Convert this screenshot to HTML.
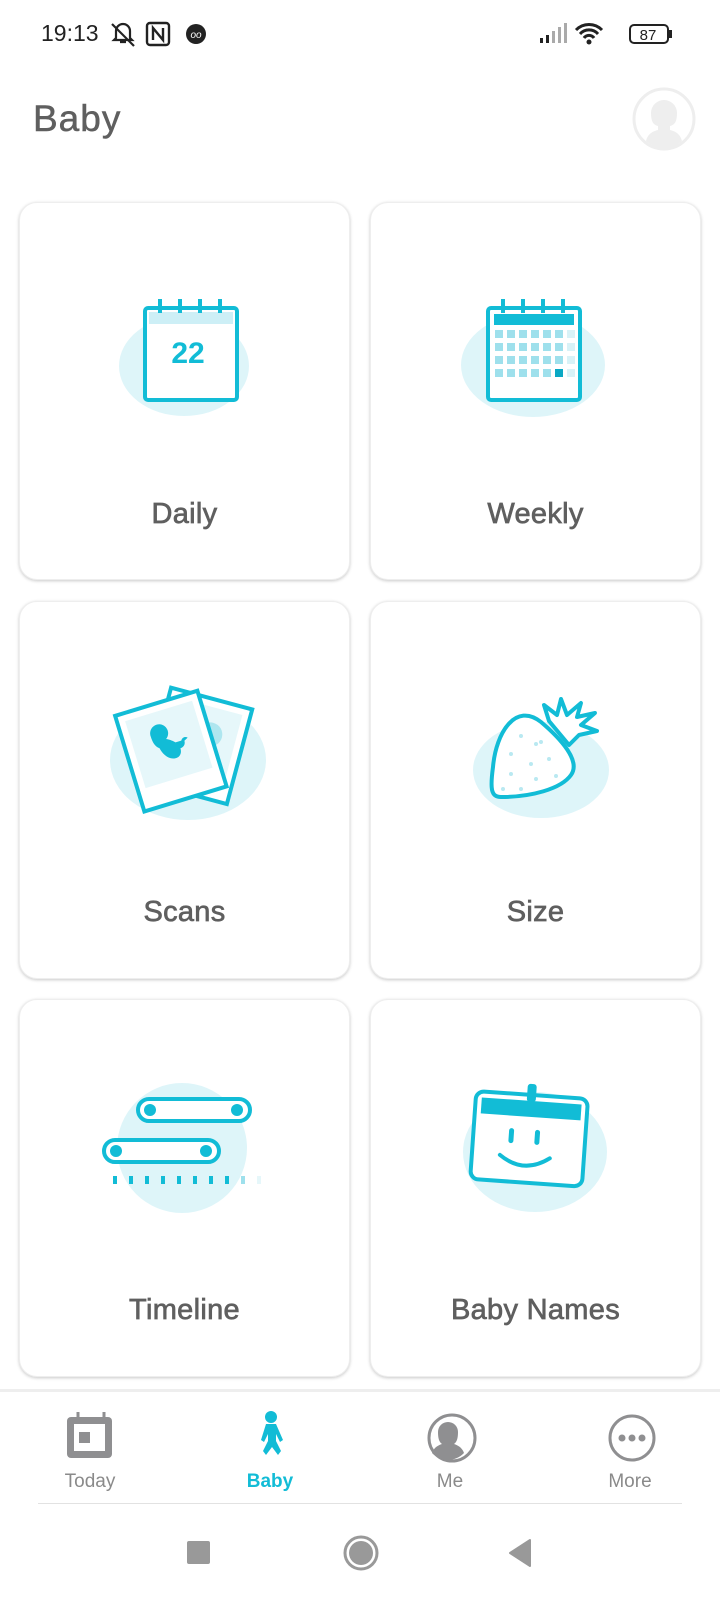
<!DOCTYPE html>
<html><head><meta charset="utf-8"><style>
*{margin:0;padding:0;box-sizing:border-box}
body{width:720px;height:1600px;background:#fff;font-family:"Liberation Sans",sans-serif;position:relative;overflow:hidden;color:#666}
.abs{position:absolute}
.card{position:absolute;width:331px;height:378px;border-radius:18px;background:#fff;box-shadow:0 1px 3px rgba(0,0,0,.22);border:1px solid #eee}
.lbl{position:absolute;left:0;right:0;text-align:center;font-size:29px;color:#5f5f5f;font-weight:normal;-webkit-text-stroke:0.7px #5f5f5f;letter-spacing:.3px}
.nav{position:absolute;top:1471px;font-size:19px;color:#8a8a8a;text-align:center;width:120px}
</style></head><body>
<div class="abs" style="left:41px;top:20px;font-size:23px;color:#222">19:13</div>
<svg class="abs" style="left:110px;top:20px" width="110" height="30">
<path d="M4 20 L6 18 V11 a7 7 0 0 1 14 0 V18 L22 20 Z M10 22 h6" fill="none" stroke="#222" stroke-width="2.2"/><path d="M2 4 L24 26" stroke="#222" stroke-width="2.2"/>
<rect x="37" y="3" width="22" height="22" rx="3" fill="none" stroke="#222" stroke-width="2.4"/><path d="M43 20 V8 L53 20 V8" fill="none" stroke="#222" stroke-width="2.4"/>
<circle cx="86" cy="14" r="10" fill="#222"/><text x="86" y="18" font-size="10" fill="#fff" text-anchor="middle" font-style="italic">oo</text>
</svg>
<svg class="abs" style="left:538px;top:20px" width="140" height="30">
<rect x="2" y="18" width="3" height="5" fill="#222"/><rect x="8" y="15" width="3" height="8" fill="#222"/><rect x="14" y="11" width="3" height="12" fill="#aaa"/><rect x="20" y="7" width="3" height="16" fill="#aaa"/><rect x="26" y="3" width="3" height="20" fill="#aaa"/>
<path d="M38 10 a18 18 0 0 1 26 0 M42 14 a12 12 0 0 1 18 0 M46 18 a6 6 0 0 1 10 0" fill="none" stroke="#222" stroke-width="3"/><circle cx="51" cy="22" r="2.5" fill="#222"/>
<rect x="92" y="5" width="38" height="18" rx="4" fill="none" stroke="#222" stroke-width="2"/><rect x="131" y="10" width="3" height="8" fill="#222"/><text x="110" y="20" font-size="15" fill="#222" text-anchor="middle">87</text>
</svg>
<div class="abs" style="left:33px;top:98px;font-size:37px;color:#5f5f5f;letter-spacing:1px;-webkit-text-stroke:0.5px #5f5f5f">Baby</div>
<svg class="abs" style="left:632px;top:87px" width="64" height="64"><circle cx="32" cy="32" r="30" fill="#fff" stroke="#eee" stroke-width="3"/><path d="M14 54 c2-8 8-10 12-11 v-4 c-5-1-7-5-7-13 a13 13 0 0 1 26 0 c0 8-2 12-7 13 v4 c4 1 10 3 12 11 a27 27 0 0 1-36 0Z" fill="#eee"/></svg>

<div class="card" style="left:19px;top:202px">
<svg class="abs" style="left:0;top:0" width="331" height="300">
<ellipse cx="164" cy="163" rx="65" ry="50" fill="#def5f9"/>
<rect x="125" y="105" width="92" height="92" rx="3" fill="#fff" stroke="#12bcd6" stroke-width="4"/>
<rect x="129" y="109" width="84" height="12" fill="#cdeff6"/>
<g stroke="#12bcd6" stroke-width="4"><path d="M140 96v14M160 96v14M180 96v14M200 96v14"/></g>
<text x="168" y="160" font-size="30" font-weight="bold" fill="#12bcd6" text-anchor="middle">22</text>
</svg><div class="lbl" style="top:295px">Daily</div></div>

<div class="card" style="left:370px;top:202px">
<svg class="abs" style="left:0;top:0" width="331" height="300">
<ellipse cx="162" cy="162" rx="72" ry="52" fill="#def5f9"/>
<rect x="117" y="105" width="92" height="92" rx="3" fill="#fff" stroke="#12bcd6" stroke-width="4"/>
<rect x="123" y="111" width="80" height="11" fill="#12bcd6"/>
<g stroke="#12bcd6" stroke-width="4"><path d="M132 96v14M152 96v14M172 96v14M192 96v14"/></g>
<g fill="#9ee0ec">
<rect x="124" y="127" width="8" height="8"/><rect x="136" y="127" width="8" height="8"/><rect x="148" y="127" width="8" height="8"/><rect x="160" y="127" width="8" height="8"/><rect x="172" y="127" width="8" height="8"/><rect x="184" y="127" width="8" height="8"/>
<rect x="124" y="140" width="8" height="8"/><rect x="136" y="140" width="8" height="8"/><rect x="148" y="140" width="8" height="8"/><rect x="160" y="140" width="8" height="8"/><rect x="172" y="140" width="8" height="8"/><rect x="184" y="140" width="8" height="8"/>
<rect x="124" y="153" width="8" height="8"/><rect x="136" y="153" width="8" height="8"/><rect x="148" y="153" width="8" height="8"/><rect x="160" y="153" width="8" height="8"/><rect x="172" y="153" width="8" height="8"/><rect x="184" y="153" width="8" height="8"/>
<rect x="124" y="166" width="8" height="8"/><rect x="136" y="166" width="8" height="8"/><rect x="148" y="166" width="8" height="8"/><rect x="160" y="166" width="8" height="8"/><rect x="172" y="166" width="8" height="8"/></g>
<g fill="#d8f2f7"><rect x="196" y="127" width="8" height="8"/><rect x="196" y="140" width="8" height="8"/><rect x="196" y="153" width="8" height="8"/><rect x="196" y="166" width="8" height="8"/></g>
<rect x="184" y="166" width="8" height="8" fill="#0aa8c4"/>
</svg><div class="lbl" style="top:295px">Weekly</div></div>

<div class="card" style="left:19px;top:601px">
<svg class="abs" style="left:0;top:0" width="331" height="300">
<ellipse cx="168" cy="158" rx="78" ry="60" fill="#def5f9"/>
<g transform="translate(8,0)">
<g transform="rotate(15 172 140)"><rect x="130" y="95" width="84" height="98" fill="#fff" stroke="#12bcd6" stroke-width="4"/><rect x="138" y="103" width="68" height="66" fill="#e6f7fa"/><circle cx="180" cy="130" r="12" fill="#aee6ef"/></g>
<g transform="rotate(-17 140 150)"><rect x="100" y="100" width="86" height="100" fill="#fff" stroke="#12bcd6" stroke-width="4"/><rect x="108" y="108" width="70" height="70" fill="#e6f7fa"/>
<path d="M128 130 a9 9 0 1 1 14 7 c4 2 6 4 8 6 l6 0 c2-3 5-3 7-1 l-4 2 c0 4-3 6-6 6 c0 6-4 9-9 8 c-6-1-10-8-11-14 c-4-3-5-8-5-14z" fill="#12bcd6"/></g></g>
</svg><div class="lbl" style="top:294px">Scans</div></div>

<div class="card" style="left:370px;top:601px">
<svg class="abs" style="left:0;top:0" width="331" height="300">
<ellipse cx="170" cy="168" rx="68" ry="48" fill="#def5f9"/>
<g transform="translate(10,2)">
<path d="M160 118 c-25-20-45 10-48 45 c-3 22 -2 30 8 30 c30 0 60-8 70-22 c10-14 -10-36-30-53z" fill="#fff" stroke="#12bcd6" stroke-width="4"/>
<path d="M168 117 l-5-16 13 10 4-16 6 16 14-12 -4 14 18-4 -14 12 16 6 -18 4 -10 10z" fill="#fff" stroke="#12bcd6" stroke-width="4" stroke-linejoin="round"/>
<g fill="#b9e9f1"><circle cx="140" cy="132" r="2"/><circle cx="155" cy="140" r="2"/><circle cx="130" cy="150" r="2"/><circle cx="150" cy="160" r="2"/><circle cx="168" cy="155" r="2"/><circle cx="130" cy="170" r="2"/><circle cx="155" cy="175" r="2"/><circle cx="175" cy="172" r="2"/><circle cx="122" cy="185" r="2"/><circle cx="140" cy="185" r="2"/><circle cx="160" cy="138" r="2"/></g></g>
</svg><div class="lbl" style="top:294px">Size</div></div>

<div class="card" style="left:19px;top:999px">
<svg class="abs" style="left:0;top:0" width="331" height="300">
<ellipse cx="162" cy="148" rx="65" ry="65" fill="#def5f9"/>
<rect x="118" y="99" width="112" height="22" rx="11" fill="#fff" stroke="#12bcd6" stroke-width="4"/>
<circle cx="130" cy="110" r="6" fill="#12bcd6"/><circle cx="217" cy="110" r="6" fill="#12bcd6"/>
<rect x="84" y="140" width="115" height="22" rx="11" fill="#fff" stroke="#12bcd6" stroke-width="4"/>
<circle cx="96" cy="151" r="6" fill="#12bcd6"/><circle cx="186" cy="151" r="6" fill="#12bcd6"/>
<g stroke="#12bcd6" stroke-width="4"><path d="M95 176v8M111 176v8M127 176v8M143 176v8M159 176v8M175 176v8M191 176v8M207 176v8"/></g>
<path d="M223 176v8" stroke="#9ee0ec" stroke-width="4"/><path d="M239 176v8" stroke="#e6f7fa" stroke-width="4"/>
</svg><div class="lbl" style="top:294px">Timeline</div></div>

<div class="card" style="left:370px;top:999px">
<svg class="abs" style="left:0;top:0" width="331" height="300">
<ellipse cx="164" cy="152" rx="72" ry="60" fill="#def5f9"/>
<g transform="rotate(4 160 140)"><rect x="102" y="95" width="112" height="88" rx="8" fill="#fff" stroke="#12bcd6" stroke-width="4"/>
<rect x="108" y="101" width="100" height="16" fill="#12bcd6"/><rect x="153" y="84" width="9" height="18" rx="3" fill="#12bcd6"/>
<path d="M140 132v10M166 132v10" stroke="#12bcd6" stroke-width="5" stroke-linecap="round"/>
<path d="M130 157 q25 18 50 0" fill="none" stroke="#12bcd6" stroke-width="4" stroke-linecap="round"/></g>
</svg><div class="lbl" style="top:294px">Baby Names</div></div>

<div class="abs" style="left:0;top:1389px;width:720px;height:3px;background:#eee"></div>
<svg class="abs" style="left:0;top:1410px" width="720" height="60">
<path d="M78 2v8M104 2v8" stroke="#8f8f91" stroke-width="3"/><rect x="67" y="7" width="45" height="41" rx="4" fill="#8f8f91"/><rect x="74" y="14" width="31" height="27" fill="#fff"/><rect x="79" y="22" width="11" height="11" fill="#8f8f91"/>
<circle cx="271" cy="7" r="6" fill="#12bcd6"/><path d="M266 14 h10 l7 16 -3 2 -4-8 v7 l5 10 -3 4 -6-8 -6 8 -3-4 5-10 v-7 l-4 8 -3-2z" fill="#12bcd6"/>
<circle cx="452" cy="28" r="23" fill="none" stroke="#8f8f91" stroke-width="3"/><path d="M432 43 c2-6 7-8 10-9 c-3-2-4-6-4-12 a10 10 0 0 1 20 0 c0 6-1 10-4 12 c3 1 8 3 10 9 a22 22 0 0 1-32 0z" fill="#8f8f91"/>
<circle cx="632" cy="28" r="22" fill="none" stroke="#8f8f91" stroke-width="3"/><circle cx="622" cy="28" r="3.5" fill="#8f8f91"/><circle cx="632" cy="28" r="3.5" fill="#8f8f91"/><circle cx="642" cy="28" r="3.5" fill="#8f8f91"/>
</svg>
<div class="nav" style="left:30px">Today</div>
<div class="nav" style="left:210px;color:#12bcd6;font-weight:bold">Baby</div>
<div class="nav" style="left:390px">Me</div>
<div class="nav" style="left:570px">More</div>
<div class="abs" style="left:38px;top:1503px;width:644px;height:1px;background:#e2e2e2"></div>
<svg class="abs" style="left:0;top:1530px" width="720" height="50">
<rect x="187" y="11" width="23" height="23" rx="2" fill="#999"/>
<circle cx="361" cy="23" r="16" fill="none" stroke="#999" stroke-width="3"/><circle cx="361" cy="23" r="12" fill="#999"/>
<path d="M530 10 v26 l-20-13z" fill="#999" stroke="#999" stroke-linejoin="round" stroke-width="2"/>
</svg>
</body></html>
